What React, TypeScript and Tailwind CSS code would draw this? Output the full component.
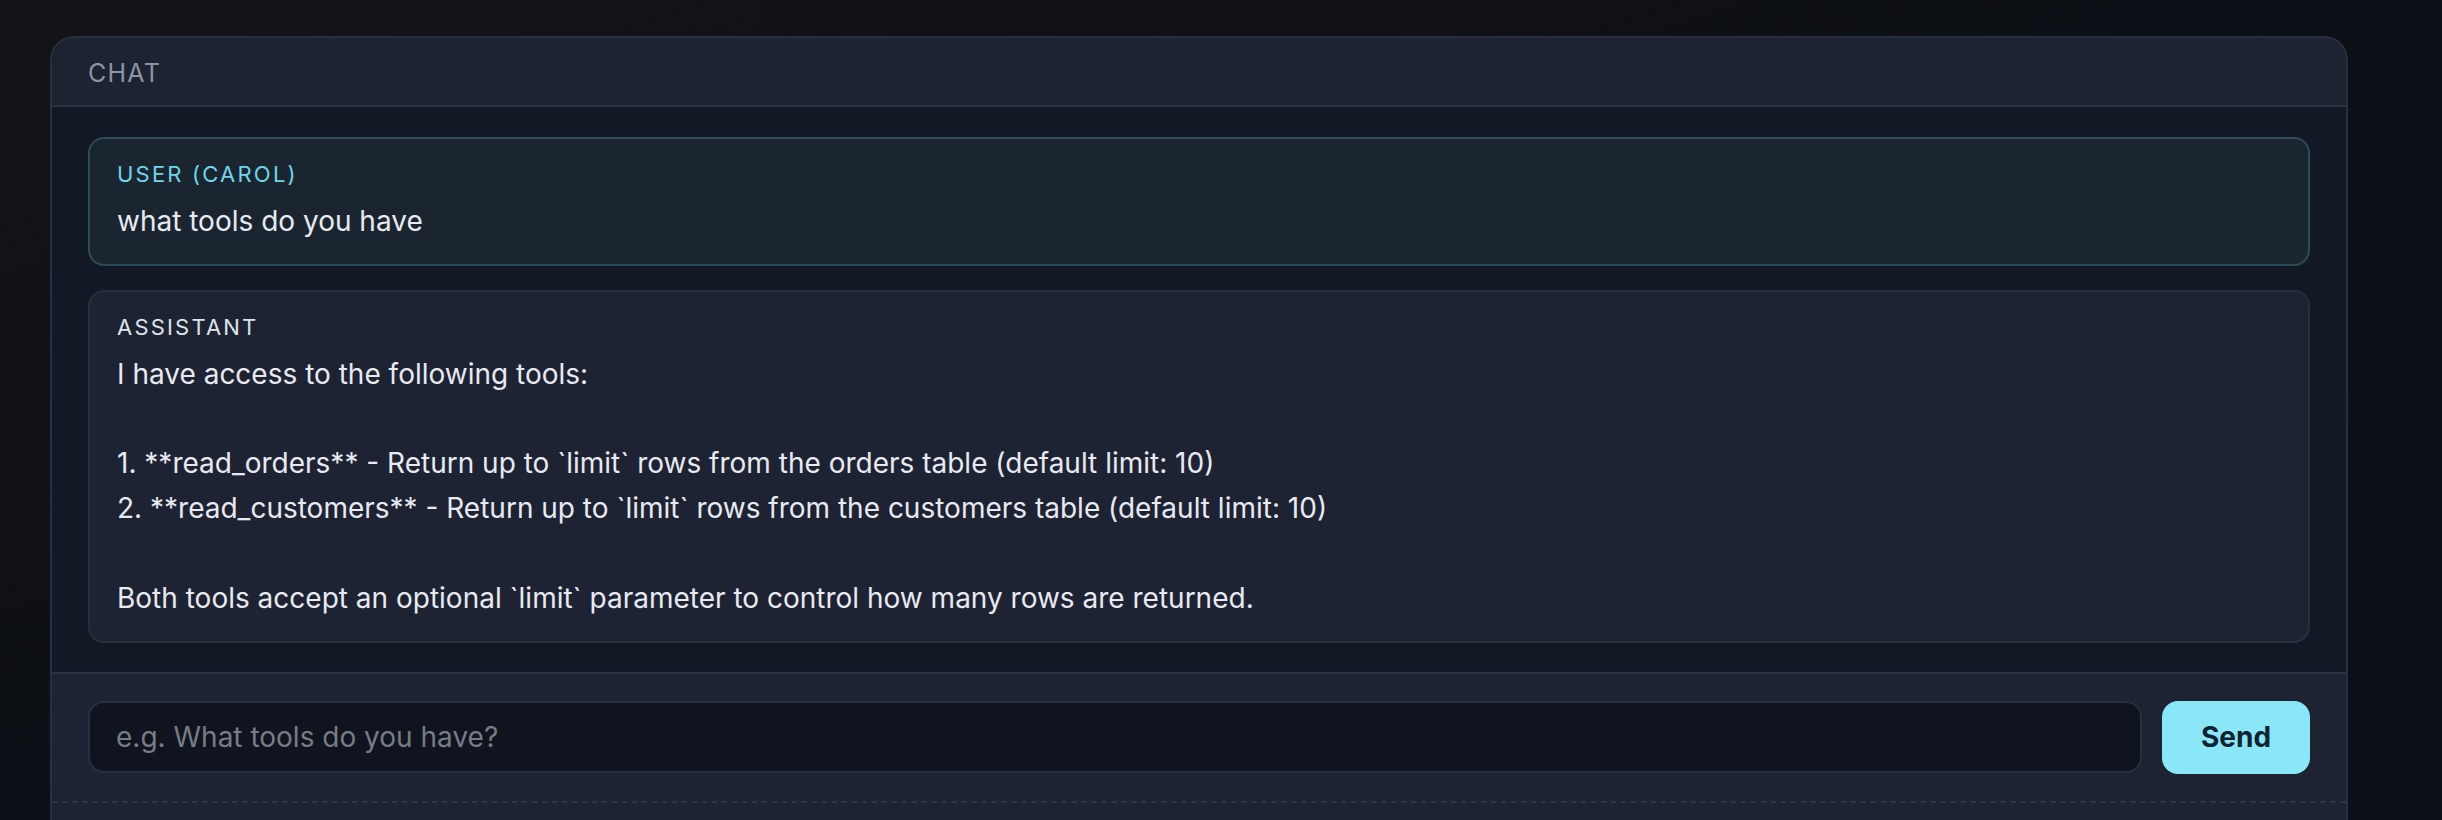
const assistantReply = `I have access to the following tools:

1. **read_orders** - Return up to \`limit\` rows from the orders table (default limit: 10)
2. **read_customers** - Return up to \`limit\` rows from the customers table (default limit: 10)

Both tools accept an optional \`limit\` parameter to control how many rows are returned.`;

function Message({ role, text, user }: { role: string; text: string; user?: boolean }) {
  return (
    <div
      className={
        user
          ? "rounded-[16px] border-2 border-[#2d4b59] bg-[#1b2530] px-[27px] py-[20px]"
          : "rounded-[16px] border-2 border-[#272f3f] bg-[#1e2333] px-[27px] py-[20px]"
      }
    >
      <p
        className={
          user
            ? "text-[22px] leading-[30px] uppercase tracking-[0.1em] text-[#6fd6ea]"
            : "text-[22px] leading-[30px] uppercase tracking-[0.1em] text-[#dfe3ea]"
        }
      >
        {role}
      </p>
      <p className="mt-[10px] text-[28px] leading-[1.6] text-[#e7eaf0] whitespace-pre-wrap">{text}</p>
    </div>
  );
}

export default function App() {
  return (
    <main
      className="min-h-screen bg-gradient-to-br from-[#131418] via-[#0c0f15] to-[#0c1018] pt-[36px] pl-[50px]"
      style={{ fontFamily: "Inter, 'Noto Sans', sans-serif" }}
    >
      <section className="w-[2298px] rounded-t-[24px] border-2 border-b-0 border-[#273042] overflow-hidden">
        <header className="h-[69px] flex items-center px-[36px] pt-[5px] bg-[#1d2331] border-b-2 border-[#2a3344]">
          <h2 className="text-[25px] uppercase tracking-[0.05em] text-[#8a95a8]">Chat</h2>
        </header>

        <div className="bg-[#131924] px-[36px] pt-[30px] pb-[29px] flex flex-col gap-[24px]">
          <Message role="User (carol)" text="what tools do you have" user />
          <Message role="Assistant" text={assistantReply} />
        </div>

        <div className="bg-[#1d2332] border-t-2 border-[#2a3344]">
          <form className="flex items-center gap-[20px] px-[36px] pt-[27px] pb-[27px]">
            <input
              className="flex-1 h-[72px] rounded-[16px] border-2 border-[#263041] bg-[#0f141f] px-[26px] text-[28px] text-[#e7eaf0] placeholder:text-[#777c85] outline-none"
              placeholder="e.g. What tools do you have?"
            />
            <button
              type="button"
              className="h-[73px] w-[148px] rounded-[16px] bg-[#8ae7f8] text-[28px] font-bold text-[#0f2430]"
            >
              Send
            </button>
          </form>
          <div className="h-[60px] border-t-2 border-dashed border-[#2c3546]" />
        </div>
      </section>
    </main>
  );
}
